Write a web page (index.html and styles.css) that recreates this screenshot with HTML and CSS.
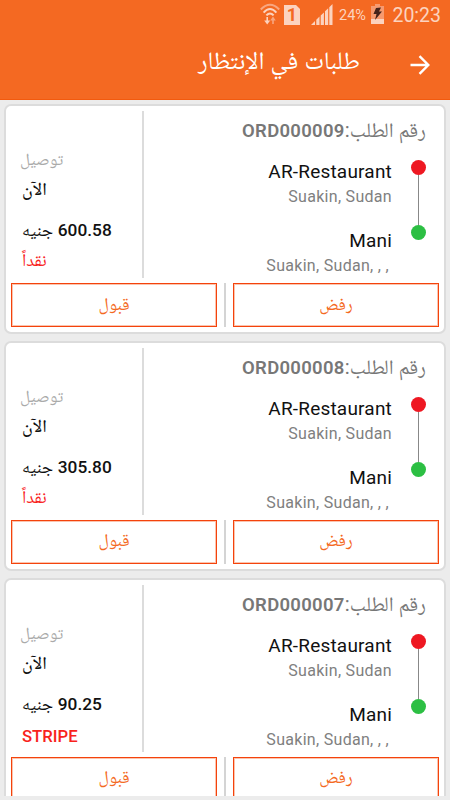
FILE: index.html
```
<!DOCTYPE html>
<html lang="ar" dir="rtl">
<head>
    <meta charset="UTF-8">
    <title>طلبات في الإنتظار</title>
    <link rel="stylesheet" href="styles.css">
</head>
<body>
<div class="header">
    <div class="status" dir="ltr">
        <svg class="wifi" width="20" height="23" viewBox="0 0 20 23" fill="none" stroke="#fcd3bf" stroke-width="2">
            <path d="M0.8 6.5Q10-3 19.2 6.5" stroke="#f8a680"/>
            <path d="M3.6 9.6Q10 2.6 16.4 9.6"/>
            <path d="M6.4 12.4Q10 8.4 13.6 12.4"/>
            <path d="M7.2 14v4" stroke-width="1.6"/>
            <path d="M4.2 17.5h6l-3 4z" fill="#fcd3bf" stroke="none"/>
            <path d="M13 21v-4" stroke="#f8a680" stroke-width="1.6"/>
            <path d="M10.2 17.5h5.6l-2.8-4z" fill="#f8a680" stroke="none"/>
        </svg>
        <span class="sim">1</span>
        <svg class="signal" width="22" height="21" viewBox="0 0 22 21" fill="#fcd3bf">
            <path d="M0 21l4-4v4zM5.3 21v-5.2l3.2-3.2v8.4zM9.7 21v-9.5l3.2-3v12.5zM14 21v-13.7l3.2-3v16.7zM18.3 21v-17.8l3.2-3.2v21z"/>
        </svg>
        <span class="percent">24%</span>
        <svg class="battery" width="13" height="20" viewBox="0 0 13 20">
            <path d="M0 2h4v-2h5v2h4v14h-13z" fill="#f79a6f"/>
            <path d="M0 15h13v5h-13z" fill="#fcd3bf"/>
            <path d="M5 4l5-.5-2 4h3l-7 8.500 1.500-6h-3z" fill="#46231a"/>
        </svg>
        <span class="time">20:23</span>
    </div>
    <div class="title">
        <svg width="20" height="20" viewBox="0 0 20 20" fill="none" stroke="#fff" stroke-width="2.400">
            <path d="M0.500 10h17.500M9.500 1.200l8.800 8.800-8.800 8.800"/>
        </svg>
        <h1>طلبات في الإنتظار</h1>
    </div>
</div>
<div class="list">
    <div class="card">
        <div class="info">
            <div class="order">
                <h2>رقم الطلب:<b>ORD000009</b></h2>
                <div class="route">
                    <div class="track"><i class="red"></i><i class="line"></i><i class="green"></i></div>
                    <div class="places" dir="ltr">
                        <p class="name">AR-Restaurant</p>
                        <p class="address">Suakin, Sudan</p>
                        <p class="name second">Mani</p>
                        <p class="address last">Suakin, Sudan, , ,</p>
                    </div>
                </div>
            </div>
            <div class="payment">
                <p class="type">توصيل</p>
                <p class="when">الآن</p>
                <p class="price"><b>600.58</b> جنيه</p>
                <p class="method">نقداً</p>
            </div>
        </div>
        <div class="buttons">
            <button>رفض</button>
            <span class="split"></span>
            <button>قبول</button>
        </div>
    </div>
    <div class="card">
        <div class="info">
            <div class="order">
                <h2>رقم الطلب:<b>ORD000008</b></h2>
                <div class="route">
                    <div class="track"><i class="red"></i><i class="line"></i><i class="green"></i></div>
                    <div class="places" dir="ltr">
                        <p class="name">AR-Restaurant</p>
                        <p class="address">Suakin, Sudan</p>
                        <p class="name second">Mani</p>
                        <p class="address last">Suakin, Sudan, , ,</p>
                    </div>
                </div>
            </div>
            <div class="payment">
                <p class="type">توصيل</p>
                <p class="when">الآن</p>
                <p class="price"><b>305.80</b> جنيه</p>
                <p class="method">نقداً</p>
            </div>
        </div>
        <div class="buttons">
            <button>رفض</button>
            <span class="split"></span>
            <button>قبول</button>
        </div>
    </div>
    <div class="card">
        <div class="info">
            <div class="order">
                <h2>رقم الطلب:<b>ORD000007</b></h2>
                <div class="route">
                    <div class="track"><i class="red"></i><i class="line"></i><i class="green"></i></div>
                    <div class="places" dir="ltr">
                        <p class="name">AR-Restaurant</p>
                        <p class="address">Suakin, Sudan</p>
                        <p class="name second">Mani</p>
                        <p class="address last">Suakin, Sudan, , ,</p>
                    </div>
                </div>
            </div>
            <div class="payment">
                <p class="type">توصيل</p>
                <p class="when">الآن</p>
                <p class="price"><b>90.25</b> جنيه</p>
                <p class="method card-pay">STRIPE</p>
            </div>
        </div>
        <div class="buttons">
            <button>رفض</button>
            <span class="split"></span>
            <button>قبول</button>
        </div>
    </div>
</div>
</body>
</html>
```
FILE: styles.css
```
* { margin: 0; padding: 0; box-sizing: border-box;}
body {
    height: 800px;
    overflow: hidden;
    background-color: #ececec;
    font-family: Roboto, "Noto Naskh Arabic", "Noto Sans Arabic", "DejaVu Sans", sans-serif;
}
.header {
    height: 100px;
    background-color: #f46922;
    border-bottom: 1px solid #f25a0e;
}
.status {
    height: 32px;
    padding: 3px 9px 0 260px;
    display: flex;
    align-items: flex-start;
    color: #fcd3bf;
    white-space: nowrap;
}
.sim {
    width: 16px;
    height: 20px;
    margin: 2px 11px 0 4px;
    background-color: #fcd3bf;
    clip-path: polygon(0 0, 75% 0, 100% 20%, 100% 100%, 0 100%);
    color: #f46922;
    font-size: 18px;
    font-weight: bold;
    line-height: 20px;
    text-align: center;
}
.signal { margin-top: 1px;}
.percent {
    width: 28px;
    margin: 3px 0 0 6px;
    font-size: 14.5px;
    line-height: 20px;
}
.battery { margin: 1px 0 0 4px;}
.time {
    margin: 1px 0 0 auto;
    font-size: 19.500px;
    line-height: 24px;
}
.title {
    height: 67px;
    padding: 0 20px;
    display: flex;
    align-items: center;
    color: #fff;
}
.title svg { margin-top: -2px;}
.title h1 {
    margin: -9px 50px 0 0;
    font-size: 25px;
    font-weight: normal;
    line-height: 36px;
}
.list {
    height: 696px;
    padding: 4px 4px 0;
    overflow: hidden;
}
.card {
    height: 229.800px;
    margin-bottom: 7px;
    border: 2px solid #dcdcdc;
    border-radius: 7px;
    background-color: #fff;
}
.info {
    height: 172px;
    padding-top: 5px;
    display: flex;
}
.order {
    width: 302px;
    padding: 7px 18px 0 0;
    border-left: 2px solid #dcdcdc;
}
.order h2 {
    height: 24px;
    color: #777;
    font-size: 20.500px;
    font-weight: normal;
    line-height: 24px;
    white-space: nowrap;
}
.order h2 b {
    font-size: 18.500px;
    font-weight: 600;
    letter-spacing: .3px;
}
.route {
    padding-top: 18px;
    display: flex;
}
.track {
    width: 15px;
    height: 80px;
    margin-left: 19px;
    display: flex;
    flex-direction: column;
    align-items: center;
}
.track i { display: block;}
.red, .green {
    width: 15px;
    height: 15px;
    border-radius: 50%;
}
.red { background-color: #ee1822;}
.green { background-color: #2cbf43;}
.line {
    width: 1px;
    height: 50px;
    background-color: #888;
}
.places { text-align: right;}
.name {
    color: #111;
    font-size: 19px;
    line-height: 24px;
    letter-spacing: .2px;
}
.second { margin-top: 20px;}
.address {
    color: #808080;
    font-size: 16px;
    line-height: 25px;
    letter-spacing: .3px;
}
.last { padding-right: 3px;}
.payment {
    width: 136px;
    padding: 33px 0 0 16px;
    text-align: left;
}
.payment p {
    height: 30px;
    font-size: 18px;
    line-height: 30px;
}
.payment b {
    font-size: 17.300px;
    font-weight: 500;
}
.payment .type {
    margin-left: -2px;
    color: #aaa;
    font-size: 17px;
}
.when, .price { color: #111;}
.when { font-weight: 500;}
.payment .when { height: 41px;}
.payment .method { color: #f8231c;}
.payment .card-pay {
    padding-top: 3px;
    font-size: 16.700px;
    font-weight: 500;
}
.buttons {
    height: 44px;
    margin-top: 5px;
    padding: 0 5px;
    display: flex;
    justify-content: space-between;
}
.buttons button {
    width: 206px;
    padding-top: 1px;
    border: 1px solid #f4430c;
    box-shadow: inset 0 0 0 1px #fbc4ae;
    background-color: #fff;
    color: #f46922;
    font-family: inherit;
    font-size: 17.500px;
}
.split {
    width: 2px;
    background-color: #d4d4d4;
}
```
